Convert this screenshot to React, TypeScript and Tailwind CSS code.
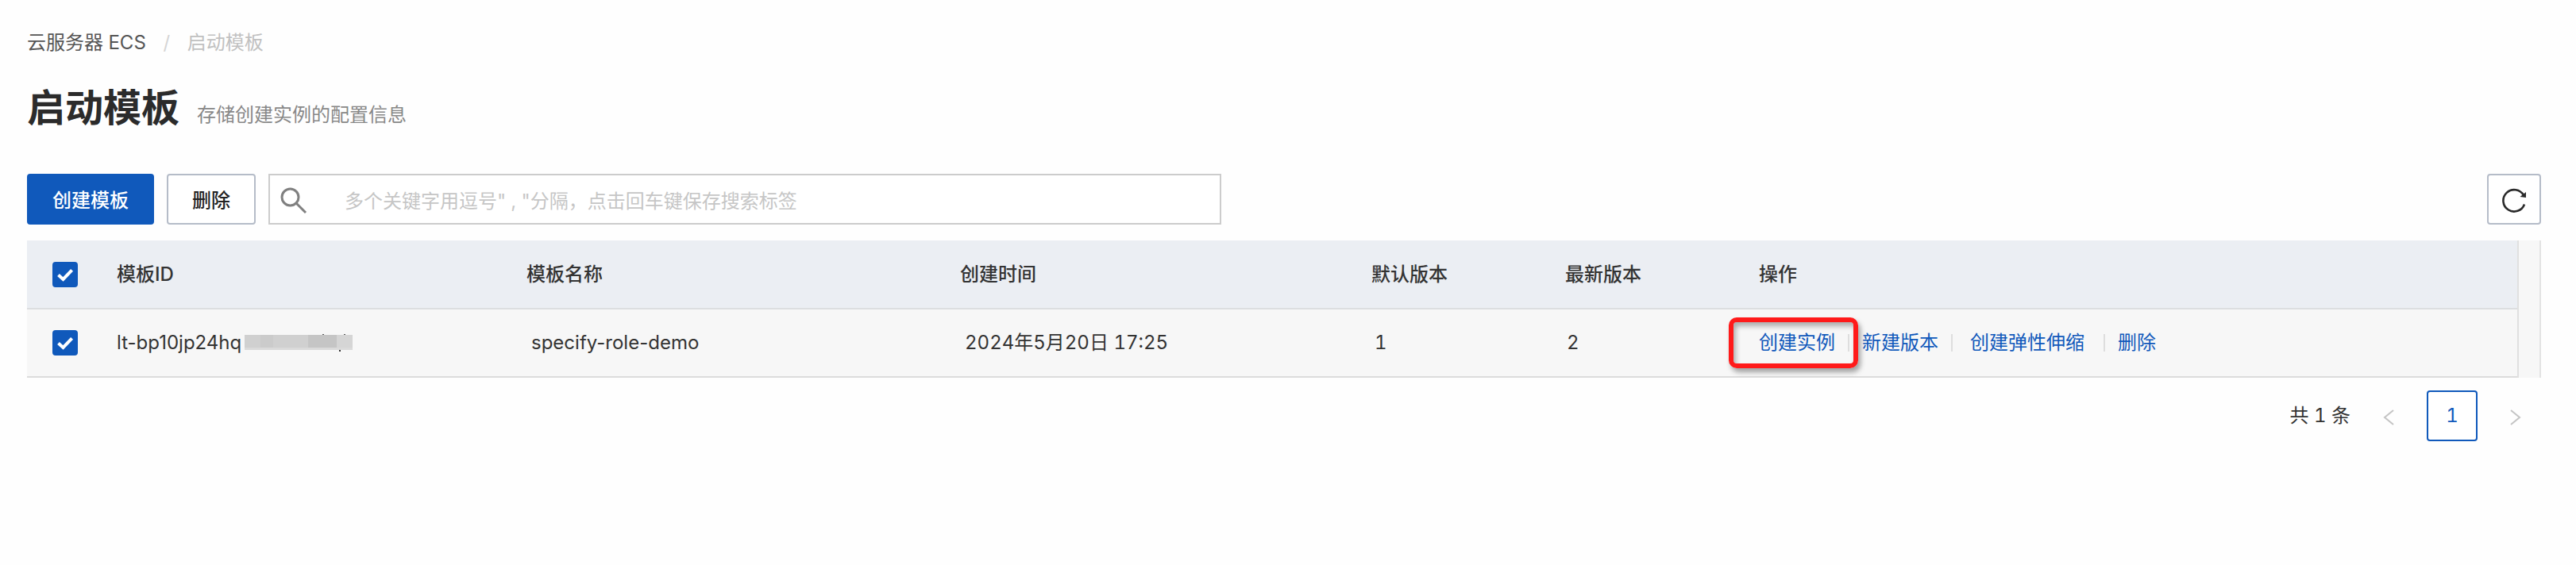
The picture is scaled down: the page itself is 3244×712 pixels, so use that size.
import React from 'react';

const columns = [
  { title: '模板ID', width: 'w-[516px]' },
  { title: '模板名称', width: 'w-[546px]' },
  { title: '创建时间', width: 'w-[518px]' },
  { title: '默认版本', width: 'w-[244px]' },
  { title: '最新版本', width: 'w-[244px]' },
  { title: '操作', width: '' },
];

function Check({ label }: { label: string }) {
  return (
    <label className="grid size-8">
      <input
        type="checkbox"
        defaultChecked
        aria-label={label}
        className="peer col-start-1 row-start-1 size-8 appearance-none rounded-[4px] border-2 border-[#b5bcc8] bg-white checked:border-[#1059bb] checked:bg-[#1059bb]"
      />
      <svg
        viewBox="0 0 32 32"
        className="pointer-events-none col-start-1 row-start-1 hidden size-8 text-white peer-checked:block"
        fill="none"
        stroke="currentColor"
        strokeWidth="4"
      >
        <path d="M7.5 16.5 L13.5 22 L24.6 10.3" />
      </svg>
    </label>
  );
}

function Divider() {
  return <span className="h-[22px] w-[2px] bg-[#dedede]" />;
}

function MaskedTail() {
  return (
    <svg viewBox="0 0 136 22" className="h-[22px] w-[136px]" shapeRendering="crispEdges">
      <rect y="1" width="136" height="16" fill="#d0d0d0" />
      <rect y="17" width="136" height="3" fill="#dadada" />
      <rect x="20" y="1" width="16" height="16" fill="#cbcbcb" />
      <rect x="80" y="1" width="36" height="16" fill="#c5c5c5" />
      <rect x="116" y="1" width="20" height="16" fill="#d5d5d5" />
      <rect x="98" y="0" width="2" height="1" fill="#555" />
      <rect x="125" y="0" width="2" height="1" fill="#555" />
      <rect x="119" y="20" width="2" height="2" fill="#333" />
    </svg>
  );
}

export default function App() {
  const link = 'text-[#1059bb] hover:underline';
  return (
    <main className="min-h-screen bg-[#fefefe] px-[34px] pt-[34px] pr-11 font-['Inter','Noto_Sans_CJK_SC',sans-serif] text-2xl leading-10 text-[#333] tabular-nums">
      <nav aria-label="breadcrumb" className="flex">
        <a href="#ecs" className="text-[#555]">云服务器 ECS</a>
        <span className="w-[52px] text-center text-[#d5d5d5]">/</span>
        <span className="text-[#c1c1c1]">启动模板</span>
      </nav>

      <header className="mt-[26px] flex items-baseline gap-[22px]">
        <h1 className="text-5xl leading-[72px] font-semibold text-[#2b2b2b]">启动模板</h1>
        <p className="text-[#888]">存储创建实例的配置信息</p>
      </header>

      <div className="mt-[47px] flex items-center gap-4">
        <button type="button" className="h-16 w-40 rounded-[4px] bg-[#1059bb] pt-1 font-medium text-white">
          创建模板
        </button>
        <button type="button" className="h-16 w-28 rounded-[4px] border-2 border-[#b5bcc8] bg-white pt-1 font-medium text-[#222]">
          删除
        </button>
        <label className="flex h-16 w-[1200px] items-center border-2 border-[#ccc] bg-white pl-3">
          <svg viewBox="0 0 36 36" className="mt-1 size-9 shrink-0" fill="none" stroke="#808080" strokeWidth="3">
            <circle cx="13.5" cy="13.5" r="10.5" />
            <path d="M21 21 L33 33" />
          </svg>
          <input
            type="text"
            aria-label="搜索"
            placeholder='多个关键字用逗号" , "分隔，点击回车键保存搜索标签'
            className="ml-[46px] h-full flex-1 bg-transparent pt-1 outline-none placeholder:text-[#c6c6c6]"
          />
        </label>
        <button
          type="button"
          aria-label="刷新"
          className="ml-auto flex h-16 w-[68px] items-center justify-center rounded-[4px] border-2 border-[#b5bcc8] bg-white"
        >
          <svg viewBox="0 0 32 32" className="mt-1 size-8" fill="none">
            <path d="M29 20.5 A13.7 13.7 0 1 1 28 9" stroke="#2b2b2b" strokeWidth="2.6" />
            <path d="M31 5 V12 L23.5 11 Z" fill="#2b2b2b" />
          </svg>
        </button>
      </div>

      <div className="mt-5 flex border-r-2 border-[#e3e3e3] bg-[#f7f7f7] pr-[26px]">
        <table className="w-full table-fixed border-separate border-spacing-0 border-r-2 border-[#e0e0e0] text-left">
          <thead>
            <tr className="bg-[#ebeef3]">
              <th className="h-[87px] w-[97px] border-b-2 border-[#dcdee0] pl-8">
                <Check label="全选" />
              </th>
              {columns.map((c) => (
                <th key={c.title} className={`${c.width} border-b-2 border-[#dcdee0] px-4 font-medium`}>
                  {c.title}
                </th>
              ))}
            </tr>
          </thead>
          <tbody>
            <tr>
              <td className="h-[86px] border-b-2 border-[#dcdcdc] pl-8">
                <Check label="选择模板" />
              </td>
              <td className="border-b-2 border-[#dcdcdc] px-4 normal-nums">
                <div className="flex items-center gap-1">
                  lt-bp10jp24hq
                  <MaskedTail />
                </div>
              </td>
              <td className="border-b-2 border-[#dcdcdc] px-[22px] normal-nums">specify-role-demo</td>
              <td className="border-b-2 border-[#dcdcdc] px-[22px]">2024年5月20日 17:25</td>
              <td className="border-b-2 border-[#dcdcdc] px-5">1</td>
              <td className="border-b-2 border-[#dcdcdc] px-[18px]">2</td>
              <td className="border-b-2 border-[#dcdcdc] px-4">
                <div className="relative flex items-center gap-4">
                  <a href="#create" className={link}>创建实例</a>
                  <Divider />
                  <a href="#version" className={link}>新建版本</a>
                  <Divider />
                  <a href="#scaling" className={`${link} mr-2 ml-1.5`}>创建弹性伸缩</a>
                  <Divider />
                  <a href="#delete" className={link}>删除</a>
                  <span className="pointer-events-none absolute -top-3 -left-[38px] h-16 w-[163px] rounded-[10px] border-6 border-[#ff1a1a] shadow-[3px_5px_6px_rgba(0,0,0,0.35),inset_3px_5px_6px_rgba(0,0,0,0.3)]" />
                </div>
              </td>
            </tr>
          </tbody>
        </table>
      </div>

      <nav aria-label="分页" className="mt-4 flex items-center justify-end">
        <span>共 1 条</span>
        <button type="button" aria-label="上一页" className="ml-4 flex h-16 w-16 items-center justify-center">
          <svg viewBox="0 0 14 20" className="mt-1 h-5 w-3.5" fill="none" stroke="#c4c4c4" strokeWidth="2">
            <path d="M13 1 L2 10 L13 19" />
          </svg>
        </button>
        <button
          type="button"
          aria-current="page"
          className="ml-4 h-16 w-16 rounded-[4px] border-2 border-[#1059bb] bg-white text-[#1059bb]"
        >
          1
        </button>
        <button type="button" aria-label="下一页" className="ml-4 flex h-16 w-16 items-center justify-center">
          <svg viewBox="0 0 14 20" className="mt-1 h-5 w-3.5" fill="none" stroke="#c4c4c4" strokeWidth="2">
            <path d="M1 1 L12 10 L1 19" />
          </svg>
        </button>
      </nav>
    </main>
  );
}
